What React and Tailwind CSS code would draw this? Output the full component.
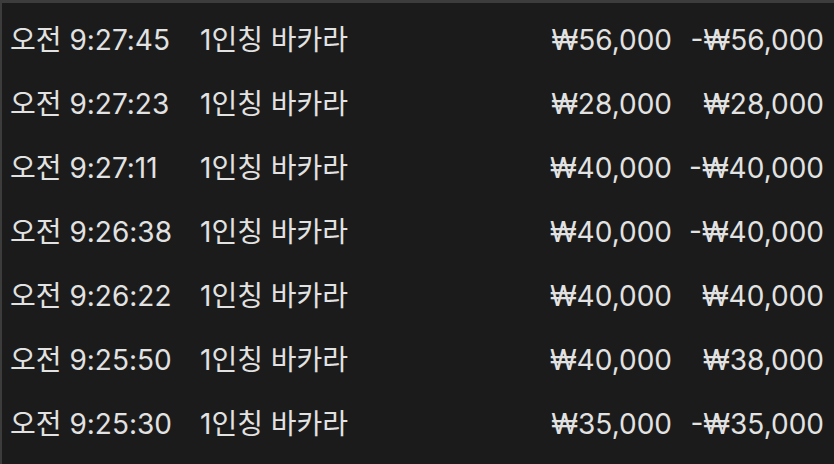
import React from 'react'

const rows = [
  ['오전 9:27:45', '1인칭 바카라', '₩56,000', '-₩56,000'],
  ['오전 9:27:23', '1인칭 바카라', '₩28,000', '₩28,000'],
  ['오전 9:27:11', '1인칭 바카라', '₩40,000', '-₩40,000'],
  ['오전 9:26:38', '1인칭 바카라', '₩40,000', '-₩40,000'],
  ['오전 9:26:22', '1인칭 바카라', '₩40,000', '₩40,000'],
  ['오전 9:25:50', '1인칭 바카라', '₩40,000', '₩38,000'],
  ['오전 9:25:30', '1인칭 바카라', '₩35,000', '-₩35,000'],
]

const App = () => {
  return (
    <div
      className="w-[834px] h-[464px] overflow-hidden bg-[#1b1b1b] border-t-[3px] border-l-[2px] border-[#3c3c3c] pt-[5px] text-[#e2e2e2] text-[28px]"
      style={{ fontFamily: 'Inter, "Noto Sans CJK KR", sans-serif' }}
    >
      {rows.map((r, i) => (
        <div key={i} className="flex items-center h-[64px] pl-[8px] pr-[10px] whitespace-nowrap">
          <div className="w-[190px]">{r[0]}</div>
          <div className="flex-1">{r[1]}</div>
          <div className="w-[160px] text-right">{r[2]}</div>
          <div className="w-[152px] text-right">{r[3]}</div>
        </div>
      ))}
    </div>
  )
}

export default App
